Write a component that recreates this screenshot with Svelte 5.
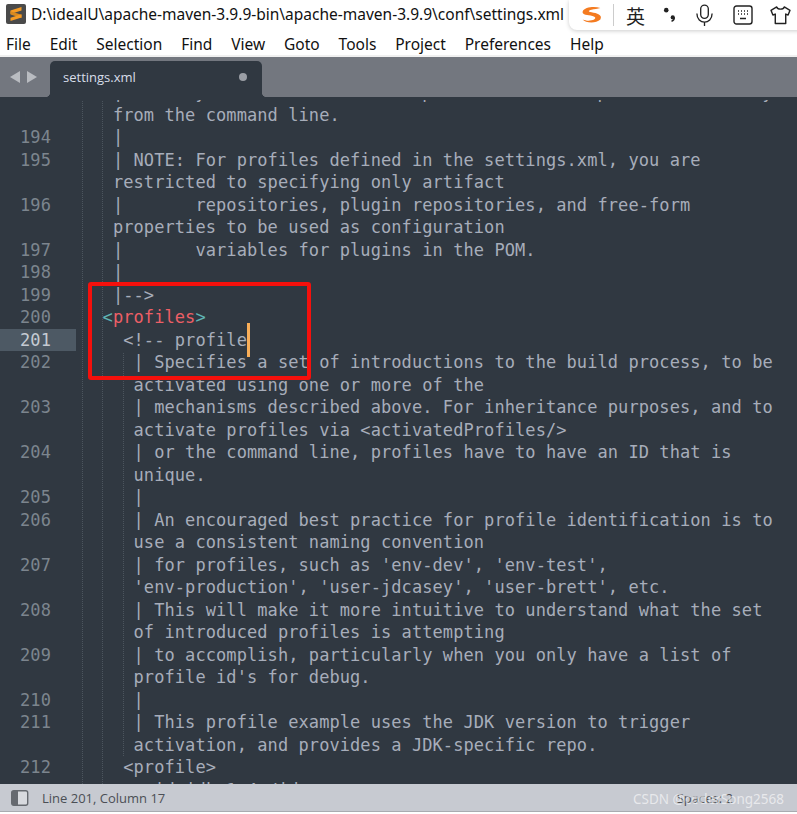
<script>
    const lines = [
        { n: '', text: '   | Finally, the list of active profiles can be specified directly' },
        { n: '', text: '   from the command line.' },
        { n: 194, text: '   |' },
        { n: 195, text: '   | NOTE: For profiles defined in the settings.xml, you are' },
        { n: '', text: '   restricted to specifying only artifact' },
        { n: 196, text: '   |       repositories, plugin repositories, and free-form' },
        { n: '', text: '   properties to be used as configuration' },
        { n: 197, text: '   |       variables for plugins in the POM.' },
        { n: 198, text: '   |' },
        { n: 199, text: '   |-->' },
        { n: 200, tag: 'profiles' },
        { n: 201, text: '    <!-- profile', current: true },
        { n: 202, text: '     | Specifies a set of introductions to the build process, to be' },
        { n: '', text: '     activated using one or more of the' },
        { n: 203, text: '     | mechanisms described above. For inheritance purposes, and to' },
        { n: '', text: '     activate profiles via <activatedProfiles/>' },
        { n: 204, text: '     | or the command line, profiles have to have an ID that is' },
        { n: '', text: '     unique.' },
        { n: 205, text: '     |' },
        { n: 206, text: '     | An encouraged best practice for profile identification is to' },
        { n: '', text: '     use a consistent naming convention' },
        { n: 207, text: "     | for profiles, such as 'env-dev', 'env-test'," },
        { n: '', text: "     'env-production', 'user-jdcasey', 'user-brett', etc." },
        { n: 208, text: '     | This will make it more intuitive to understand what the set' },
        { n: '', text: '     of introduced profiles is attempting' },
        { n: 209, text: '     | to accomplish, particularly when you only have a list of' },
        { n: '', text: "     profile id's for debug." },
        { n: 210, text: '     |' },
        { n: 211, text: '     | This profile example uses the JDK version to trigger' },
        { n: '', text: '     activation, and provides a JDK-specific repo.' },
        { n: 212, text: '    <profile>' },
        { n: '', text: '      <id>jdk-1.4</id>' }
    ];

    const menus = ['File', 'Edit', 'Selection', 'Find', 'View', 'Goto', 'Tools', 'Project', 'Preferences', 'Help'];
</script>

<div class="window">
    <header class="titlebar">
        <svg class="logo" width="20" height="20" viewBox="0 0 20 20">
            <rect width="20" height="20" rx="2" fill="#4a4a4a" />
            <path d="M15.5 3 L4.5 6.6 V10 L15.5 6.4 Z" fill="#f59b24" />
            <path d="M4.5 7.2 L15.5 10.8 V14 L4.5 10.4 Z" fill="#d98a20" />
            <path d="M15.5 10.2 L4.5 13.8 V17 L15.5 13.4 Z" fill="#f59b24" />
        </svg>
        <span class="path">D:\idealU\apache-maven-3.9.9-bin\apache-maven-3.9.9\conf\settings.xml</span>
    </header>

    <nav class="menubar">
        {#each menus as m}
            <span>{m}</span>
        {/each}
    </nav>

    <div class="tabbar">
        <div class="arrows">
            <svg width="27" height="12" viewBox="0 0 27 12">
                <path d="M10 0 L0 6 L10 12 Z" fill="#b9bcc1" />
                <path d="M17 0 L27 6 L17 12 Z" fill="#b9bcc1" />
            </svg>
        </div>
        <div class="tab">
            <span>settings.xml</span>
            <i class="dot"></i>
        </div>
    </div>

    <main class="editor">
        {#each lines as line}
            <div class="row">
                <div class="num" class:active={line.current}>{line.n}</div>
                <div class="code">
                    {#if line.tag}
                        <span class="bracket">{'  <'}</span><span class="tag">{line.tag}</span><span class="bracket">&gt;</span>
                    {:else}
                        {line.text}{#if line.current}<i class="caret"></i>{/if}
                    {/if}
                </div>
            </div>
        {/each}
        <div class="guide g1"></div>
        <div class="guide g2"></div>
        <div class="guide g3"></div>
        <div class="topclip"></div>
    </main>

    <footer class="statusbar">
        <svg width="18" height="16" viewBox="0 0 18 16">
            <rect x="0.7" y="0.7" width="16" height="14.6" rx="2" fill="#d8dadf" stroke="#666a70" stroke-width="1.4" />
            <rect x="1" y="1" width="6" height="14" fill="#666a70" />
        </svg>
        <span class="pos">Line 201, Column 17</span>
        <span class="spaces">Spaces: 2</span>
    </footer>

    <div class="ime">
        <svg class="s" width="23" height="20" viewBox="0 0 26 22">
            <path d="M23 3 C16 1 5 2 3 7 C2 11 9 11 14 12 C19 13 18 16 13 17 C9 18 6 17 3 16 C6 20 18 21 23 16 C26 11 19 9 13 8 C9 7 9 6 13 5 C16 4 20 4 23 3 Z" fill="#f47b20" />
        </svg>
        <i class="sep"></i>
        <span class="ying">英</span>
        <svg class="semi" width="13" height="18" viewBox="0 0 16 20">
            <circle cx="4" cy="4" r="2.8" fill="#222" />
            <circle cx="12" cy="13" r="2.6" fill="#222" />
            <path d="M13.8 13 C14 15.5 12.5 17 10.5 17.6" fill="none" stroke="#222" stroke-width="1.8" />
        </svg>
        <svg class="mic" width="19" height="23" viewBox="0 0 20 24">
            <rect x="6" y="1" width="8" height="14" rx="4" fill="none" stroke="#222" stroke-width="1.4" />
            <path d="M2 10 C2 22 18 22 18 10 M10 19 V23" fill="none" stroke="#222" stroke-width="1.4" />
        </svg>
        <svg class="kb" width="20" height="20" viewBox="0 0 20 20">
            <rect x="1" y="1" width="18" height="18" rx="2.5" fill="none" stroke="#222" stroke-width="1.4" />
            <path d="M5 6 H6 M8 6 H9 M11 6 H12 M14 6 H15 M5 9 H6 M8 9 H9 M11 9 H12 M14 9 H15 M7 13.5 H13" stroke="#222" stroke-width="1.4" />
        </svg>
        <svg class="shirt" width="21" height="19" viewBox="0 0 22 20">
            <path d="M7 1 L1 4.5 L3 9.5 L5.5 8.5 V18.5 H16.5 V8.5 L19 9.5 L21 4.5 L15 1 C14 4 8 4 7 1 Z" fill="none" stroke="#222" stroke-width="1.5" stroke-linejoin="round" />
        </svg>
    </div>

    <div class="callout"></div>
    <div class="watermark">CSDN @coderSong2568</div>
    <div class="behind">0 TIP</div>
</div>

<style>
    :global(body) {
        background: #fff;
    }

    .window {
        position: relative;
        width: 797px;
        height: 814px;
        overflow: hidden;
        display: flex;
        flex-direction: column;
        font-family: "Open Sans", "Noto Sans", sans-serif;
        background: #fff;
    }

    .titlebar {
        height: 27px;
        flex: none;
        display: flex;
        align-items: center;
        gap: 5px;
        padding-left: 6px;
        color: #111;
        font-size: 15.5px;
        font-family: "Noto Sans", sans-serif;
        white-space: nowrap;
    }

    .logo {
        flex: none;
    }

    .menubar {
        height: 30px;
        flex: none;
        display: flex;
        align-items: center;
        gap: 18.9px;
        padding: 6px 0 0 6px;
        font-size: 15.5px;
        font-family: "Noto Sans", sans-serif;
        color: #111;
        border-bottom: 2px solid #f0f0f0;
        box-sizing: border-box;
    }

    .tabbar {
        height: 40px;
        background: #73777f;
        display: flex;
        align-items: flex-end;
        flex: none;
    }

    .arrows {
        width: 50px;
        height: 40px;
        padding-left: 10px;
        box-sizing: border-box;
        display: flex;
        align-items: center;
    }

    .tab {
        position: relative;
        width: 212px;
        height: 36px;
        background: #303841;
        border-radius: 5px 5px 0 0;
        display: flex;
        align-items: center;
        justify-content: space-between;
        padding: 0 15px 4px 13px;
        box-sizing: border-box;
        color: #d8dee9;
        font-size: 13px;
    }

    .tab::before,
    .tab::after {
        content: "";
        position: absolute;
        bottom: 0;
        width: 5px;
        height: 5px;
    }

    .tab::before {
        left: -5px;
        background: radial-gradient(circle at 0 0, transparent 5px, #303841 5.5px);
    }

    .tab::after {
        right: -5px;
        background: radial-gradient(circle at 100% 0, transparent 5px, #303841 5.5px);
    }

    .dot {
        width: 8px;
        height: 8px;
        border-radius: 50%;
        background: #9a9ea5;
    }

    .editor {
        position: relative;
        flex: 1;
        min-height: 0;
        overflow: hidden;
        background: #303841;
    }

    .row {
        display: flex;
        height: 22.5px;
        line-height: 22.5px;
        font-family: "DejaVu Sans Mono", monospace;
        font-size: 17px;
        letter-spacing: 0.075px;
        position: relative;
        top: -15.75px;
    }

    .num {
        width: 76px;
        flex: none;
        padding-right: 25px;
        box-sizing: border-box;
        text-align: right;
        color: #7c858e;
    }

    .num.active {
        background: #4d5964;
        color: #c5cbd3;
    }

    .code {
        margin-left: 6px;
        white-space: pre;
        color: #a7adba;
    }

    .bracket {
        color: #5fb4b4;
    }

    .tag {
        color: #ec5f66;
    }

    .caret {
        display: inline-block;
        width: 3px;
        height: 34px;
        background: #f9ae58;
        vertical-align: -11px;
        margin-top: -11px;
    }

    .guide {
        position: absolute;
        top: 0;
        bottom: 0;
        width: 0;
        border-left: 1px dotted #4c555e;
    }

    .g1 { left: 82px; }
    .g2 { left: 102px; }

    .g3 {
        left: 123px;
        top: 256px;
        bottom: 28px;
    }

    /* the first wrapped line is cut a little below the tab bar */
    .topclip {
        position: absolute;
        top: 0;
        left: 0;
        right: 0;
        height: 3px;
        background: #303841;
    }

    .statusbar {
        height: 28px;
        flex: none;
        margin-bottom: 2px;
        background: #c7cad1;
        border-bottom: 1px solid #a9abb0;
        box-sizing: border-box;
        display: flex;
        align-items: center;
        padding-left: 11px;
        font-size: 13px;
        color: #4b4f55;
        position: relative;
    }

    .pos {
        margin-left: 13px;
    }

    .spaces {
        margin-left: auto;
        margin-right: 64px;
    }

    .ime {
        position: absolute;
        top: 0;
        left: 569px;
        width: 240px;
        height: 30px;
        background: #fff;
        border-radius: 0 0 0 8px;
        box-shadow: 0 1px 4px rgba(0, 0, 0, 0.2);
        display: flex;
        align-items: center;
        padding-left: 11px;
        box-sizing: border-box;
    }

    .sep {
        width: 1px;
        height: 22px;
        background: #ccc;
        margin-left: 10px;
    }

    .ying {
        font-family: "Noto Sans CJK SC", sans-serif;
        font-size: 19px;
        color: #222;
        margin-left: 12px;
    }

    .semi { margin-left: 18px; }
    .mic { margin-left: 19px; }
    .kb { margin-left: 19px; }
    .shirt { margin-left: 17px; }

    .callout {
        position: absolute;
        left: 88px;
        top: 282px;
        width: 223px;
        height: 98px;
        box-sizing: border-box;
        border: 4px solid #f5100c;
        border-radius: 3px;
    }

    .watermark {
        position: absolute;
        left: 633px;
        top: 790px;
        font-size: 13.5px;
        color: rgba(255, 255, 255, 0.6);
        font-family: "Noto Sans", sans-serif;
        white-space: nowrap;
    }

    .behind {
        position: absolute;
        left: 758px;
        top: 810px;
        font-size: 11px;
        color: #3a6fb5;
        font-family: "Noto Sans", sans-serif;
    }
</style>
